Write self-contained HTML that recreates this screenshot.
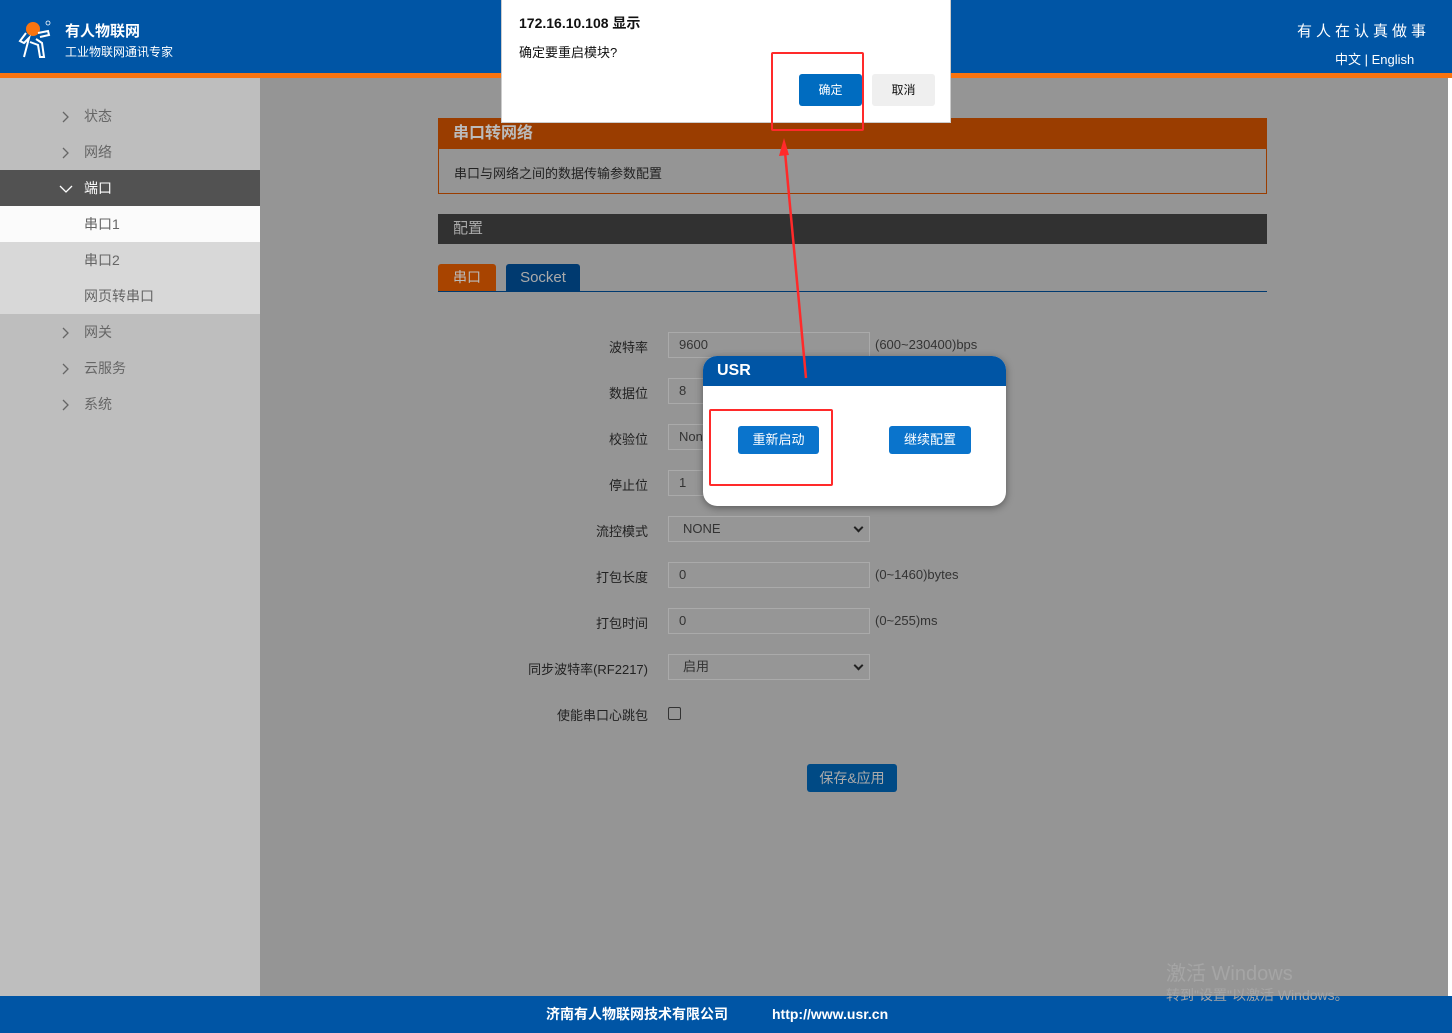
<!DOCTYPE html>
<html><head><meta charset="utf-8"><style>
*{margin:0;padding:0;box-sizing:border-box}
body{width:1452px;height:1033px;position:relative;overflow:hidden;background:#959595;font-family:"Liberation Sans","Noto Sans CJK SC",sans-serif;font-size:14px;color:#222}
.a{position:absolute}
#hdr{left:0;top:0;width:1452px;height:73px;background:#0055a5}
#ob{left:0;top:73px;width:1452px;height:5px;background:#f97410}
#side{left:0;top:78px;width:260px;height:918px;background:#bebebe}
.mi{position:absolute;left:0;width:260px;height:36px;line-height:36px;padding-left:84px;color:#666;font-size:14px}
.mi svg{position:absolute;left:60px;top:13px}
.fl{position:absolute;width:200px;text-align:right;left:448px;color:#222;font-size:13px}
.in{position:absolute;left:668px;width:202px;height:26px;border:1px solid #aaa;background:#969696;color:#333;font-size:13px;line-height:24px;padding-left:10px}
.hint{position:absolute;left:875px;font-size:13px;color:#333}
.sel:after{content:"";position:absolute;right:7px;top:7px;width:5px;height:5px;border-right:2px solid #222;border-bottom:2px solid #222;transform:rotate(45deg)}
#foot{left:0;top:996px;width:1452px;height:37px;background:#0055a5;color:#fff;font-size:14px;line-height:37px;font-weight:bold}
.btn{position:absolute;color:#fff;text-align:center;border-radius:3px}
.red{position:absolute;border:2px solid #ff2a2a;border-radius:2px}
</style></head><body>
<div class="a" id="hdr">
 <svg class="a" style="left:16px;top:19px" width="38" height="40" viewBox="0 0 38 40"><circle cx="17" cy="10" r="7" fill="#f97410"/><path d="M10 14 L4 22 L8 24 L13 19 L8 38 M14 23 L22 26 L24 38 L28 38 L26 24 L20 20 M22 14 L32 12 L33 16 L24 18" fill="none" stroke="#fff" stroke-width="2"/><circle cx="32" cy="4" r="2" fill="none" stroke="#fff" stroke-width="0.8"/></svg>
 <div class="a" style="left:65px;top:20px;color:#fff;font-size:15px;font-weight:bold">有人物联网</div>
 <div class="a" style="left:65px;top:43px;color:#fff;font-size:12px">工业物联网通讯专家</div>
 <div class="a" style="left:1297px;top:20px;color:#fff;font-size:15px;letter-spacing:4px">有人在认真做事</div>
 <div class="a" style="left:1335px;top:49px;color:#fff;font-size:13px">中文 | English</div>
</div>
<div class="a" id="ob"></div>
<div class="a" style="left:1448px;top:78px;width:4px;height:918px;background:#fff"></div>
<div class="a" id="side">
 <div class="mi" style="top:20px"><svg width="10" height="12"><path d="M3 1 L8 6 L3 11" fill="none" stroke="#666" stroke-width="1.3"/></svg>状态</div>
 <div class="mi" style="top:56px"><svg width="10" height="12"><path d="M3 1 L8 6 L3 11" fill="none" stroke="#666" stroke-width="1.3"/></svg>网络</div>
 <div class="mi" style="top:92px;background:#525252;color:#fff"><svg width="14" height="10" style="left:59px;top:14px"><path d="M1 2 L7 8 L13 2" fill="none" stroke="#fff" stroke-width="1.3"/></svg>端口</div>
 <div class="mi" style="top:128px;background:#fbfbfb">串口1</div>
 <div class="mi" style="top:164px;background:#d8d8d8">串口2</div>
 <div class="mi" style="top:200px;background:#d8d8d8">网页转串口</div>
 <div class="mi" style="top:236px"><svg width="10" height="12"><path d="M3 1 L8 6 L3 11" fill="none" stroke="#666" stroke-width="1.3"/></svg>网关</div>
 <div class="mi" style="top:272px"><svg width="10" height="12"><path d="M3 1 L8 6 L3 11" fill="none" stroke="#666" stroke-width="1.3"/></svg>云服务</div>
 <div class="mi" style="top:308px"><svg width="10" height="12"><path d="M3 1 L8 6 L3 11" fill="none" stroke="#666" stroke-width="1.3"/></svg>系统</div>
</div>
<div class="a" style="left:438px;top:118px;width:829px;height:76px;border:1px solid #9a3d00"></div>
<div class="a" style="left:438px;top:118px;width:829px;height:31px;background:#9a3d00;color:#bbb;font-size:16px;font-weight:bold;line-height:31px;padding-left:15px">串口转网络</div>
<div class="a" style="left:454px;top:163px;font-size:13px;color:#222">串口与网络之间的数据传输参数配置</div>
<div class="a" style="left:438px;top:214px;width:829px;height:30px;background:#313131;color:#aaa;font-size:15px;line-height:30px;padding-left:15px">配置</div>
<div class="a" style="left:438px;top:264px;width:58px;height:27px;background:#a84400;border-radius:3px 3px 0 0;color:#bbb;line-height:27px;text-align:center">串口</div>
<div class="a" style="left:506px;top:264px;width:74px;height:27px;background:#003a70;border-radius:3px 3px 0 0;color:#aaa;font-size:15px;line-height:27px;text-align:center">Socket</div>
<div class="a" style="left:438px;top:291px;width:829px;height:1px;background:#003a70"></div>

<div class="fl" style="top:337px">波特率</div><div class="in" style="top:332px">9600</div><div class="hint" style="top:337px">(600~230400)bps</div>
<div class="fl" style="top:383px">数据位</div><div class="in" style="top:378px">8</div>
<div class="fl" style="top:429px">校验位</div><div class="in" style="top:424px">None</div>
<div class="fl" style="top:475px">停止位</div><div class="in" style="top:470px">1</div>
<div class="fl" style="top:521px">流控模式</div><div class="in sel" style="top:516px;padding-left:14px">NONE</div>
<div class="fl" style="top:567px">打包长度</div><div class="in" style="top:562px">0</div><div class="hint" style="top:567px">(0~1460)bytes</div>
<div class="fl" style="top:613px">打包时间</div><div class="in" style="top:608px">0</div><div class="hint" style="top:613px">(0~255)ms</div>
<div class="fl" style="top:659px">同步波特率(RF2217)</div><div class="in sel" style="top:654px;padding-left:14px">启用</div>
<div class="fl" style="top:705px">使能串口心跳包</div>
<div class="a" style="left:668px;top:707px;width:13px;height:13px;border:1px solid #333;border-radius:2px"></div>
<div class="btn" style="left:807px;top:764px;width:90px;height:28px;background:#004a85;color:#aaa;line-height:28px;font-size:14px">保存&amp;应用</div>

<div class="a" style="left:703px;top:356px;width:303px;height:150px;background:#fff;border-radius:14px;box-shadow:0 2px 8px rgba(0,0,0,.4);overflow:hidden">
 <div style="height:30px;background:#0055a5;color:#fff;font-weight:bold;font-size:16px;line-height:30px;padding-left:14px">USR</div>
 <div class="btn" style="left:35px;top:70px;width:81px;height:28px;background:#0a74cc;line-height:28px;font-size:13px">重新启动</div>
 <div class="btn" style="left:186px;top:70px;width:82px;height:28px;background:#0a74cc;line-height:28px;font-size:13px">继续配置</div>
</div>
<div class="red" style="left:709px;top:409px;width:124px;height:77px"></div>

<div class="a" style="left:501px;top:0;width:450px;height:123px;background:#fff;border:1px solid #ccc;border-top:none">
 <div class="a" style="left:17px;top:13px;font-size:14px;font-weight:bold;color:#111">172.16.10.108 显示</div>
 <div class="a" style="left:17px;top:42px;font-size:13px;color:#111">确定要重启模块?</div>
 <div class="btn" style="left:297px;top:74px;width:63px;height:32px;background:#006cc0;line-height:32px;font-size:12px">确定</div>
 <div class="btn" style="left:370px;top:74px;width:63px;height:32px;background:#efefef;color:#111;line-height:32px;font-size:12px">取消</div>
</div>
<div class="red" style="left:771px;top:52px;width:93px;height:79px"></div>
<svg class="a" style="left:0;top:0" width="1452" height="1033"><line x1="806" y1="378" x2="785" y2="152" stroke="#ff2a2a" stroke-width="2.5"/><path d="M784 138 L779 156 L789 155 Z" fill="#ff2a2a"/></svg>

<div class="a" style="left:1166px;top:957px;font-size:20px;color:#a5a5a5">激活 Windows</div>
<div class="a" id="foot"><span style="position:absolute;left:546px">济南有人物联网技术有限公司</span><span style="position:absolute;left:772px">http://www.usr.cn</span></div>
<div class="a" style="left:1166px;top:985px;font-size:14px;color:#a5a5a5">转到"设置"以激活 Windows。</div>
</body></html>
